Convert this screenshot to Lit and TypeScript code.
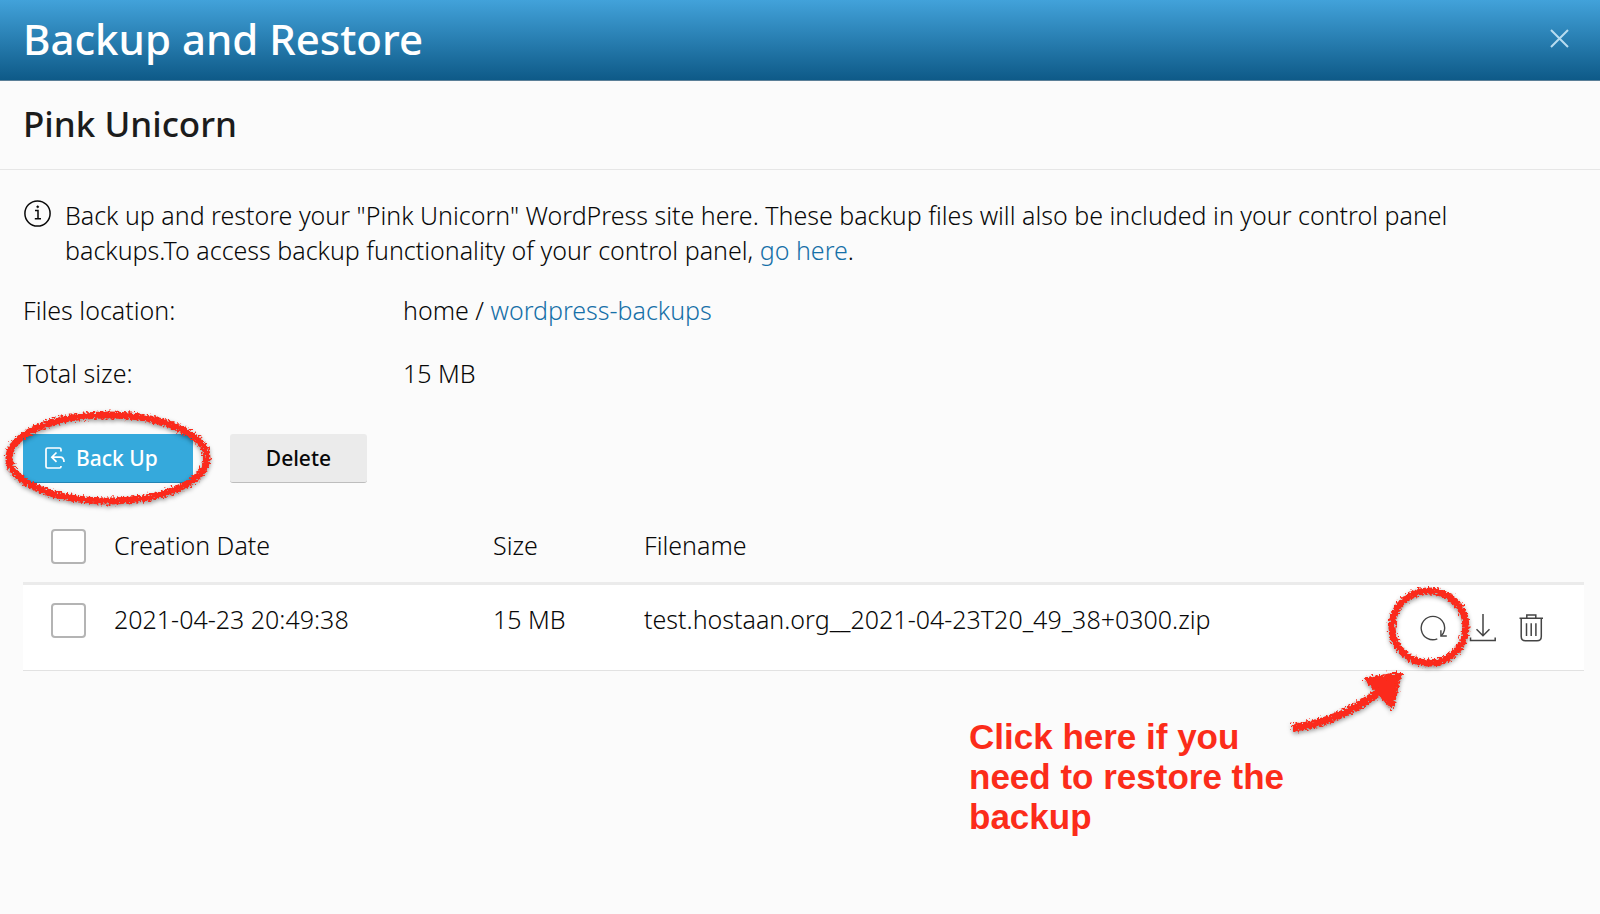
import { LitElement, html, css, svg } from "lit";
import { customElement, property } from "lit/decorators.js";

interface BackupEntry {
  created: string;
  size: string;
  filename: string;
}

const closeIcon = svg`<path d="M1 1 18 18M18 1 1 18" />`;

/** Hand-drawn looking marker ring laid over a control. */
@customElement("marker-ring")
export class MarkerRing extends LitElement {
  @property({ type: Number }) rx = 40;
  @property({ type: Number }) ry = 40;

  static styles = css`
    :host {
      display: block;
      pointer-events: none;
    }
    svg {
      display: block;
      overflow: visible;
      filter: drop-shadow(0 2px 2px rgba(0, 0, 0, 0.4));
    }
    ellipse {
      fill: none;
      stroke: #fb2c1a;
      stroke-width: 7;
    }
  `;

  render() {
    const w = this.rx * 2 + 8;
    const h = this.ry * 2 + 8;
    return html`<svg width=${w} height=${h} viewBox="0 0 ${w} ${h}" aria-hidden="true">
      <filter id="rough" x="-10%" y="-10%" width="120%" height="120%">
        <feTurbulence type="fractalNoise" baseFrequency="0.5" numOctaves="2" seed="4" />
        <feDisplacementMap in="SourceGraphic" scale="8" xChannelSelector="R" yChannelSelector="G" />
      </filter>
      <ellipse cx=${w / 2} cy=${h / 2} rx=${this.rx} ry=${this.ry} filter="url(#rough)" />
    </svg>`;
  }
}

@customElement("app-root")
export class AppRoot extends LitElement {
  @property({ attribute: false }) backups: BackupEntry[] = [
    {
      created: "2021-04-23 20:49:38",
      size: "15 MB",
      filename: "test.hostaan.org__2021-04-23T20_49_38+0300.zip",
    },
  ];

  static styles = css`
    :host {
      display: block;
      min-height: 100vh;
      box-sizing: border-box;
      background: #fbfbfb;
      color: #080808;
      font: 350 25px/35px "Noto Sans", "Open Sans", sans-serif;
      overflow: hidden;
    }
    button {
      font: inherit;
      color: inherit;
      border: 0;
      padding: 0;
      background: none;
      cursor: pointer;
    }
    svg {
      display: block;
      flex: none;
      fill: none;
      stroke: currentColor;
    }
    a {
      color: #1670a8;
      text-decoration: none;
    }
    .bar {
      display: flex;
      align-items: center;
      justify-content: space-between;
      box-sizing: border-box;
      height: 81px;
      padding: 0 31px 3px 23px;
      background: linear-gradient(#42a2da, #0e5a88);
      border-bottom: 1px solid #5b7f98;
      color: #fff;
    }
    .bar h1 {
      margin: 0;
      font-size: 42px;
      line-height: 56px;
      font-weight: 500;
    }
    .close {
      color: #b8dcf0;
      stroke-width: 2;
    }
    .site {
      margin: 0;
      padding: 19px 23px 21px;
      color: #1c1c1c;
      font-size: 35px;
      line-height: 48px;
      font-weight: 500;
      border-bottom: 1px solid #e6e6e6;
    }
    main {
      padding: 28px 16px 0 23px;
    }
    .info {
      display: flex;
      gap: 14px;
      padding-right: 24px;
    }
    .info p {
      margin: 0;
    }
    .facts {
      display: grid;
      grid-template-columns: 380px 1fr;
      row-gap: 28px;
      margin: 25px 0 43px;
    }
    .facts dt,
    .facts dd {
      margin: 0;
    }
    .tools {
      display: flex;
      gap: 37px;
      margin-bottom: 26px;
    }
    .marked {
      position: relative;
      display: flex;
    }
    .marked marker-ring {
      position: absolute;
      left: 50%;
      top: 50%;
      margin-top: -1px;
      transform: translate(-50%, -50%);
    }
    .btn {
      display: flex;
      align-items: center;
      gap: 11px;
      height: 49px;
      padding: 0 36px;
      font-size: 21px;
      font-weight: 500;
      background: #ebebeb;
      border-bottom: 1px solid #bdbdbd;
      border-radius: 3px;
    }
    .btn.primary {
      padding: 0 35px 0 22px;
      color: #fff;
      background: #35a9dc;
      border-bottom-color: #2384b4;
      border-radius: 1px;
    }
    table {
      width: 100%;
      table-layout: fixed;
      border-collapse: separate;
      border-spacing: 0;
    }
    th,
    td {
      padding: 0;
      text-align: left;
      font-weight: inherit;
      vertical-align: top;
    }
    th {
      padding: 19px 0 18px;
      border-bottom: 3px solid #ebebeb;
    }
    td {
      padding: 17px 0 32px;
      background: #fff;
      border-bottom: 1px solid #e2e2e2;
    }
    .c-check {
      width: 91px;
    }
    .c-date {
      width: 379px;
    }
    .c-size {
      width: 151px;
    }
    .c-act {
      width: 180px;
    }
    input {
      appearance: none;
      display: block;
      box-sizing: border-box;
      width: 35px;
      height: 35px;
      margin: 1px 0 0 28px;
      border: 2px solid #b4b4b4;
      border-radius: 4px;
      background: #fff;
    }
    td.act {
      padding: 0;
      vertical-align: middle;
    }
    .actions {
      display: flex;
      justify-content: flex-end;
      gap: 21px;
      padding-right: 39px;
      color: #444;
    }
    .ring-restore {
      margin-left: -4px;
    }
    .arrow {
      position: absolute;
      right: 43px;
      top: 56px;
      overflow: visible;
      pointer-events: none;
      filter: drop-shadow(0 2px 2px rgba(0, 0, 0, 0.4));
    }
    .note {
      position: absolute;
      right: 133px;
      top: 103px;
      width: 345px;
      margin: 0;
      color: #fb2c1a;
      font: bold 35px/40px "Liberation Sans", Arial, sans-serif;
      pointer-events: none;
    }
  `;

  private annotation() {
    return html`
      <marker-ring class="ring-restore" .rx=${37} .ry=${36}></marker-ring>
      <svg class="arrow" width="114" height="64" viewBox="0 0 114 64" aria-hidden="true">
        <filter id="rough" x="-10%" y="-10%" width="120%" height="120%">
          <feTurbulence type="fractalNoise" baseFrequency="0.5" numOctaves="2" seed="9" />
          <feDisplacementMap in="SourceGraphic" scale="8" xChannelSelector="R" yChannelSelector="G" />
        </filter>
        <g filter="url(#rough)" stroke="#fb2c1a">
          <path d="M2 58C32 55 62 42 92 20" stroke-width="8" />
          <path d="M76 9 110 4 102 37Z" fill="#fb2c1a" stroke-width="4" stroke-linejoin="round" />
        </g>
      </svg>
      <p class="note">Click here if you need to restore the backup</p>
    `;
  }

  private row(b: BackupEntry, i: number) {
    return html`<tr>
      <td><input type="checkbox" aria-label="Select ${b.filename}" /></td>
      <td>${b.created}</td>
      <td>${b.size}</td>
      <td>${b.filename}</td>
      <td class="act">
        <div class="actions">
          <div class="marked">
            <button aria-label="Restore">
              <svg width="28" height="28" viewBox="0 0 28 28" stroke-width="1.4">
                <path d="M18.3 24.9A11.7 11.7 0 1 1 25.4 16.3Q24.7 19.3 22.2 21.8" />
                <path d="M21.9 16.2V22H27.8" />
              </svg>
            </button>
            ${i === 0 ? this.annotation() : null}
          </div>
          <button aria-label="Download">
            <svg width="28" height="28" viewBox="0 0 28 28" stroke-width="1.5">
              <path d="M15 0V21.5M8.5 15.2 15 21.7 21.5 15.2M2.5 23.5V26.6H27.2V23.5" />
            </svg>
          </button>
          <button aria-label="Delete backup">
            <svg width="28" height="28" viewBox="0 0 28 28" stroke-width="1.5">
              <path d="M2.5 4.2H26M4.2 4.2V22.5Q4.2 26.8 8.5 26.8H20Q24.3 26.8 24.3 22.5V4.2M9.8 4V1H18.8V4M9.5 9.2V22M14.2 9.2V22M18.9 9.2V22" />
            </svg>
          </button>
        </div>
      </td>
    </tr>`;
  }

  render() {
    return html`
      <header class="bar">
        <h1>Backup and Restore</h1>
        <button class="close" aria-label="Close">
          <svg width="19" height="19" viewBox="0 0 19 19">${closeIcon}</svg>
        </button>
      </header>
      <h2 class="site">Pink Unicorn</h2>
      <main>
        <div class="info">
          <svg width="28" height="31" viewBox="0 0 28 31" stroke-width="1.5">
            <circle cx="14.5" cy="15.5" r="12.6" />
            <path d="M12 12.4H15V20.8M11.8 20.8H18" />
            <circle cx="14.7" cy="8.8" r="1" fill="currentColor" stroke-width="0.6" />
          </svg>
          <p>
            Back up and restore your "Pink Unicorn" WordPress site here. These backup files will also
            be included in your control panel backups.To access backup functionality of your control
            panel, <a href="#backup-manager">go here</a>.
          </p>
        </div>
        <dl class="facts">
          <dt>Files location:</dt>
          <dd>home / <a href="#wordpress-backups">wordpress-backups</a></dd>
          <dt>Total size:</dt>
          <dd>15 MB</dd>
        </dl>
        <div class="tools">
          <div class="marked">
            <button class="btn primary">
              <svg width="20" height="22" viewBox="0 0 20 22" stroke-width="1.7">
                <path d="M16 4.5V2.5Q16 1 14.5 1H2.5Q1 1 1 2.5V19.5Q1 21 2.5 21H14.5Q16 21 16 19.5V19" />
                <path d="M11.5 5.5 6.8 10.2 11.5 14.9M7 10.2H15Q19 10.2 19 15" />
              </svg>
              Back Up
            </button>
            <marker-ring .rx=${99} .ry=${43}></marker-ring>
          </div>
          <button class="btn">Delete</button>
        </div>
        <table>
          <thead>
            <tr>
              <th class="c-check"><input type="checkbox" aria-label="Select all backups" /></th>
              <th class="c-date">Creation Date</th>
              <th class="c-size">Size</th>
              <th>Filename</th>
              <th class="c-act"></th>
            </tr>
          </thead>
          <tbody>
            ${this.backups.map((b, i) => this.row(b, i))}
          </tbody>
        </table>
      </main>
    `;
  }
}
